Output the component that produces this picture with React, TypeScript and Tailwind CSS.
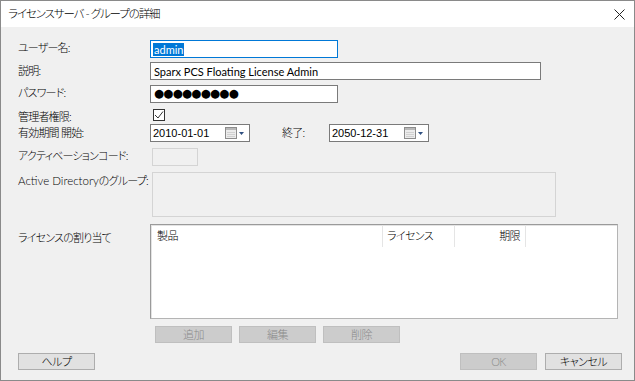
import React from "react";

const F = "font-['Lato','Noto_Sans_CJK_JP',sans-serif] [font-feature-settings:'palt']";

function CalIcon() {
  return (
    <svg width="20" height="12" viewBox="0 0 20 12" className="shrink-0">
      <rect x="0.5" y="0.5" width="11" height="11" fill="#ececec" stroke="#8c8c8c" />
      <rect x="1" y="1" width="10" height="2" fill="#b8b8b8" />
      <line x1="2" y1="5.5" x2="10" y2="5.5" stroke="#d0d0d0" />
      <line x1="2" y1="7.5" x2="10" y2="7.5" stroke="#d0d0d0" />
      <line x1="2" y1="9.5" x2="10" y2="9.5" stroke="#d0d0d0" />
      <path d="M14 5 L19 5 L16.5 8 Z" fill="#2f4f80" />
    </svg>
  );
}

function DatePicker({ value, w }: { value: string; w: string }) {
  return (
    <div className={`${w} h-[18px] bg-white border border-[#7a7a7a] flex items-center pl-[2px] pr-[4px]`}>
      <span className="flex-1 font-['Liberation_Sans',sans-serif] font-normal text-[11px] leading-none text-black">{value}</span>
      <CalIcon />
    </div>
  );
}

function Btn({ label, disabled }: { label: string; disabled?: boolean }) {
  return (
    <div
      className={`w-[77px] h-[17px] flex items-center justify-center text-[11px] tracking-[-0.5px] leading-none border ${
        disabled ? "bg-[#cccccc] border-[#bfbfbf] text-[#8a8a8a]" : "bg-[#e1e1e1] border-[#adadad] text-black"
      }`}
    >
      {label}
    </div>
  );
}

const L = "leading-none whitespace-nowrap tracking-[-0.8px]";

export default function App() {
  return (
    <div className={`${F} w-[635px] h-[381px] bg-[#f0f0f0] border border-[#8a8a8a] flex flex-col text-[11px] font-light text-black overflow-hidden`}>
      {/* title bar */}
      <div className="h-[26px] bg-white flex items-center pl-[7px] pr-[9px] shrink-0">
        <span className="flex-1 text-[11.5px] tracking-[-1.1px] leading-none">ライセンスサーバ - グループの詳細</span>
        <svg width="11" height="11" viewBox="0 0 11 11">
          <path d="M0.5 0.5 L10.5 10.5 M10.5 0.5 L0.5 10.5" stroke="#222" strokeWidth="1" />
        </svg>
      </div>

      <div className="flex flex-col pl-[17px]">
        {/* user name */}
        <div className="flex items-center mt-[13px] h-[18px]">
          <div className={`w-[132px] ${L} -mt-[3px]`}>ユーザー名:</div>
          <div className="w-[188px] h-[18px] bg-white border border-[#0078d7] flex items-center pl-[2px]">
            <span className="bg-[#0078d7] text-white font-normal text-[11px] leading-[13px] px-[1px]">admin</span>
          </div>
        </div>
        {/* description */}
        <div className="flex items-center mt-[4px] h-[18px]">
          <div className={`w-[132px] ${L} -mt-[2px]`}>説明:</div>
          <div className="w-[391px] h-[18px] bg-white border border-[#7a7a7a] flex items-center pl-[3px]">
            <span className="text-[11px] font-normal leading-none">Sparx PCS Floating License Admin</span>
          </div>
        </div>
        {/* password */}
        <div className="flex items-center mt-[5px] h-[18px]">
          <div className={`w-[132px] ${L} -mt-[4px]`}>パスワード:</div>
          <div className="w-[188px] h-[18px] bg-white border border-[#7a7a7a] flex items-center pl-[3px]">
            <span className="font-['DejaVu_Sans',sans-serif] font-normal text-[11.5px] leading-none tracking-[-0.7px]">●●●●●●●●●</span>
          </div>
        </div>
        {/* admin */}
        <div className="flex items-center mt-[6px] h-[12px]">
          <div className={`w-[135px] ${L} mt-[2px]`}>管理者権限:</div>
          <div className="w-[12px] h-[12px] bg-white border border-[#333333] flex items-center justify-center">
            <svg width="10" height="10" viewBox="0 0 10 10">
              <path d="M1 5 L4 8 L9 1.5" stroke="#333" strokeWidth="1" fill="none" />
            </svg>
          </div>
        </div>
        {/* period */}
        <div className="flex items-center mt-[3px] h-[18px]">
          <div className={`w-[132px] ${L} -mt-[2px]`}>有効期間 開始:</div>
          <DatePicker value="2010-01-01" w="w-[100px]" />
          <div className={`w-[47px] ml-[32px] ${L} -mt-[2px]`}>終了:</div>
          <DatePicker value="2050-12-31" w="w-[100px]" />
        </div>
        {/* activation */}
        <div className="flex items-center mt-[6px] h-[18px]">
          <div className={`w-[134px] ${L} -mt-[4px]`}>アクティベーションコード:</div>
          <div className="w-[46px] h-[18px] border border-[#d4d4d4] bg-[#f0f0f0]" />
        </div>
        {/* AD group */}
        <div className="flex items-start mt-[6px] h-[45px]">
          <div className="w-[134px] leading-none whitespace-nowrap mt-[3px]">
            <span className="font-light text-[11.5px]">Active Directory</span>
            <span className="tracking-[-0.8px]">のグループ:</span>
          </div>
          <div className="w-[404px] h-[45px] border border-[#d4d4d4] bg-[#f0f0f0]" />
        </div>
        {/* license list */}
        <div className="flex items-start mt-[7px] h-[95px]">
          <div className={`w-[132px] ${L} mt-[8px]`}>ライセンスの割り当て</div>
          <div className="w-[468px] h-[95px] bg-white border border-[#9a9a9a] border-r-[#b4b4b4] border-b-[#b4b4b4] shadow-[inset_1px_1px_0_#e3e3e3]">
            <div className="flex h-[22px] items-center tracking-[-0.6px]">
              <div className="w-[232px] h-full flex items-center pl-[6px] border-r border-[#e5e5e5]">製品</div>
              <div className="w-[72px] h-full flex items-center pl-[4px] border-r border-[#e5e5e5]">ライセンス</div>
              <div className="w-[71px] h-full flex items-center justify-end pr-[5px] border-r border-[#e5e5e5]">期限</div>
            </div>
          </div>
        </div>
        {/* buttons */}
        <div className="flex gap-[7px] mt-[7px] ml-[137px]">
          <Btn label="追加" disabled />
          <Btn label="編集" disabled />
          <Btn label="削除" disabled />
        </div>
        {/* bottom */}
        <div className="flex mt-[10px] pr-[12px]">
          <Btn label="ヘルプ" />
          <div className="flex-1" />
          <div className="flex gap-[8px]">
            <Btn label="OK" disabled />
            <Btn label="キャンセル" />
          </div>
        </div>
      </div>
    </div>
  );
}
